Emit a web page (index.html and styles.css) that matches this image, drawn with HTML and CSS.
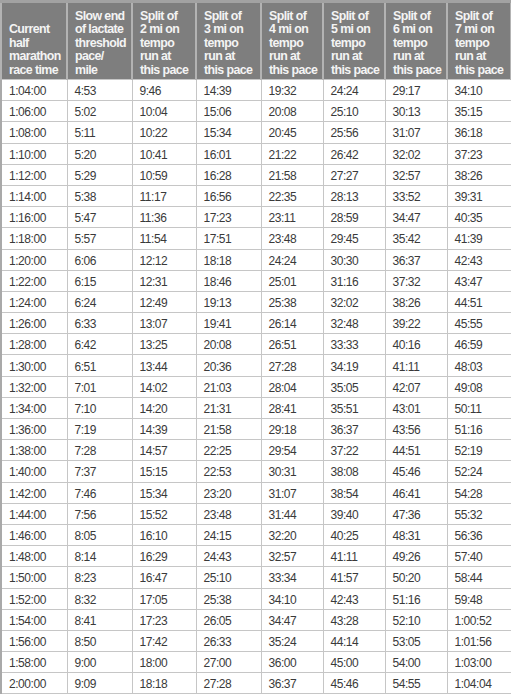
FILE: index.html
```html
<!DOCTYPE html>
<html>
<head>
<meta charset="utf-8">
<link rel="stylesheet" href="styles.css">
</head>
<body>
<table class="pace">
<colgroup>
<col class="c1"><col class="c2"><col class="c3"><col class="c4"><col class="c5"><col class="c6"><col class="c7"><col class="c8">
</colgroup>
<thead>
<tr>
<th>Current<br>half<br>marathon<br>race time</th>
<th>Slow end<br>of lactate<br>threshold<br>pace/<br>mile</th>
<th>Split of<br>2 mi on<br>tempo<br>run at<br>this pace</th>
<th>Split of<br>3 mi on<br>tempo<br>run at<br>this pace</th>
<th>Split of<br>4 mi on<br>tempo<br>run at<br>this pace</th>
<th>Split of<br>5 mi on<br>tempo<br>run at<br>this pace</th>
<th>Split of<br>6 mi on<br>tempo<br>run at<br>this pace</th>
<th>Split of<br>7 mi on<br>tempo<br>run at<br>this pace</th>
</tr>
</thead>
<tbody>
<tr><td>1:04:00</td><td>4:53</td><td>9:46</td><td>14:39</td><td>19:32</td><td>24:24</td><td>29:17</td><td>34:10</td></tr>
<tr><td>1:06:00</td><td>5:02</td><td>10:04</td><td>15:06</td><td>20:08</td><td>25:10</td><td>30:13</td><td>35:15</td></tr>
<tr><td>1:08:00</td><td>5:11</td><td>10:22</td><td>15:34</td><td>20:45</td><td>25:56</td><td>31:07</td><td>36:18</td></tr>
<tr><td>1:10:00</td><td>5:20</td><td>10:41</td><td>16:01</td><td>21:22</td><td>26:42</td><td>32:02</td><td>37:23</td></tr>
<tr><td>1:12:00</td><td>5:29</td><td>10:59</td><td>16:28</td><td>21:58</td><td>27:27</td><td>32:57</td><td>38:26</td></tr>
<tr><td>1:14:00</td><td>5:38</td><td>11:17</td><td>16:56</td><td>22:35</td><td>28:13</td><td>33:52</td><td>39:31</td></tr>
<tr><td>1:16:00</td><td>5:47</td><td>11:36</td><td>17:23</td><td>23:11</td><td>28:59</td><td>34:47</td><td>40:35</td></tr>
<tr><td>1:18:00</td><td>5:57</td><td>11:54</td><td>17:51</td><td>23:48</td><td>29:45</td><td>35:42</td><td>41:39</td></tr>
<tr><td>1:20:00</td><td>6:06</td><td>12:12</td><td>18:18</td><td>24:24</td><td>30:30</td><td>36:37</td><td>42:43</td></tr>
<tr><td>1:22:00</td><td>6:15</td><td>12:31</td><td>18:46</td><td>25:01</td><td>31:16</td><td>37:32</td><td>43:47</td></tr>
<tr><td>1:24:00</td><td>6:24</td><td>12:49</td><td>19:13</td><td>25:38</td><td>32:02</td><td>38:26</td><td>44:51</td></tr>
<tr><td>1:26:00</td><td>6:33</td><td>13:07</td><td>19:41</td><td>26:14</td><td>32:48</td><td>39:22</td><td>45:55</td></tr>
<tr><td>1:28:00</td><td>6:42</td><td>13:25</td><td>20:08</td><td>26:51</td><td>33:33</td><td>40:16</td><td>46:59</td></tr>
<tr><td>1:30:00</td><td>6:51</td><td>13:44</td><td>20:36</td><td>27:28</td><td>34:19</td><td>41:11</td><td>48:03</td></tr>
<tr><td>1:32:00</td><td>7:01</td><td>14:02</td><td>21:03</td><td>28:04</td><td>35:05</td><td>42:07</td><td>49:08</td></tr>
<tr><td>1:34:00</td><td>7:10</td><td>14:20</td><td>21:31</td><td>28:41</td><td>35:51</td><td>43:01</td><td>50:11</td></tr>
<tr><td>1:36:00</td><td>7:19</td><td>14:39</td><td>21:58</td><td>29:18</td><td>36:37</td><td>43:56</td><td>51:16</td></tr>
<tr><td>1:38:00</td><td>7:28</td><td>14:57</td><td>22:25</td><td>29:54</td><td>37:22</td><td>44:51</td><td>52:19</td></tr>
<tr><td>1:40:00</td><td>7:37</td><td>15:15</td><td>22:53</td><td>30:31</td><td>38:08</td><td>45:46</td><td>52:24</td></tr>
<tr><td>1:42:00</td><td>7:46</td><td>15:34</td><td>23:20</td><td>31:07</td><td>38:54</td><td>46:41</td><td>54:28</td></tr>
<tr><td>1:44:00</td><td>7:56</td><td>15:52</td><td>23:48</td><td>31:44</td><td>39:40</td><td>47:36</td><td>55:32</td></tr>
<tr><td>1:46:00</td><td>8:05</td><td>16:10</td><td>24:15</td><td>32:20</td><td>40:25</td><td>48:31</td><td>56:36</td></tr>
<tr><td>1:48:00</td><td>8:14</td><td>16:29</td><td>24:43</td><td>32:57</td><td>41:11</td><td>49:26</td><td>57:40</td></tr>
<tr><td>1:50:00</td><td>8:23</td><td>16:47</td><td>25:10</td><td>33:34</td><td>41:57</td><td>50:20</td><td>58:44</td></tr>
<tr><td>1:52:00</td><td>8:32</td><td>17:05</td><td>25:38</td><td>34:10</td><td>42:43</td><td>51:16</td><td>59:48</td></tr>
<tr><td>1:54:00</td><td>8:41</td><td>17:23</td><td>26:05</td><td>34:47</td><td>43:28</td><td>52:10</td><td>1:00:52</td></tr>
<tr><td>1:56:00</td><td>8:50</td><td>17:42</td><td>26:33</td><td>35:24</td><td>44:14</td><td>53:05</td><td>1:01:56</td></tr>
<tr><td>1:58:00</td><td>9:00</td><td>18:00</td><td>27:00</td><td>36:00</td><td>45:00</td><td>54:00</td><td>1:03:00</td></tr>
<tr><td>2:00:00</td><td>9:09</td><td>18:18</td><td>27:28</td><td>36:37</td><td>45:46</td><td>54:55</td><td>1:04:04</td></tr>
</tbody>
</table>
</body>
</html>
```

FILE: styles.css
```css
html, body {
  margin: 0;
  padding: 0;
  background: #ffffff;
}

.pace {
  width: 510px;
  table-layout: fixed;
  border-collapse: collapse;
  font-family: "Liberation Sans", Arial, sans-serif;
  border-left: 2px solid #a9a9a9;
  border-right: 1px solid #c4c4c4;
  border-top: 3px solid #a2a2a2;
}

.c1 { width: 66px; }
.c2 { width: 65px; }
.c3 { width: 64px; }
.c4 { width: 65px; }
.c5 { width: 62px; }
.c6 { width: 62px; }
.c7 { width: 62px; }
.c8 { width: 64px; }

.pace th {
  height: 74px;
  background: #7e7e7e;
  color: #f4f4f4;
  font-size: 12.4px;
  font-weight: bold;
  letter-spacing: -0.6px;
  line-height: 13.5px;
  text-align: left;
  vertical-align: bottom;
  padding: 0 0 2px 7px;
  border-left: 2px solid #b3b3b3;
  border-right: 2px solid #b3b3b3;
  white-space: nowrap;
  overflow: hidden;
}

.pace td {
  height: 21.2px;
  box-sizing: border-box;
  padding: 2px 0 0 7px;
  font-size: 12px;
  letter-spacing: -0.45px;
  color: #3a3a3a;
  vertical-align: middle;
  border: 1.5px solid #c6c6c6;
  white-space: nowrap;
  overflow: hidden;
}
```
